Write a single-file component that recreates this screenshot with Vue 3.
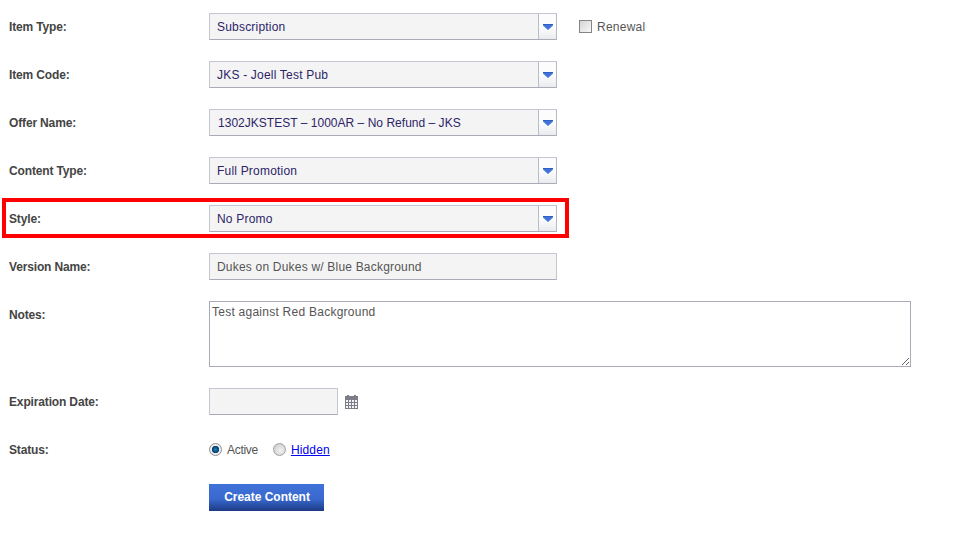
<script setup>
const selects = [
  { label: 'Item Type:', value: 'Subscription', renewal: true },
  { label: 'Item Code:', value: 'JKS - Joell Test Pub' },
  { label: 'Offer Name:', value: '1302JKSTEST – 1000AR – No Refund – JKS', tight: true },
  { label: 'Content Type:', value: 'Full Promotion' },
  { label: 'Style:', value: 'No Promo', highlight: true }
]
const calX = [1, 4, 7, 10]
const calY = [5, 8, 11]
</script>

<template>
  <form class="form" @submit.prevent>
    <div v-for="s in selects" :key="s.label" class="row">
      <div v-if="s.highlight" class="highlight"></div>
      <label class="label">{{ s.label }}</label>
      <div class="select">
        <span class="select-text" :class="{ tight: s.tight }">{{ s.value }}</span>
        <span class="select-btn"><svg width="10" height="6" viewBox="0 0 10 6"><path d="M0 0h10v1.5L5 6 0 1.5z" fill="#3f74d6"/><path d="M0 0h10v1H0z" fill="#2f5fc4"/></svg></span>
      </div>
      <div v-if="s.renewal" class="renewal">
        <span class="checkbox"></span>
        <span>Renewal</span>
      </div>
    </div>

    <div class="row">
      <label class="label">Version Name:</label>
      <div class="input version">Dukes on Dukes w/ Blue Background</div>
    </div>

    <div class="row row-notes">
      <label class="label">Notes:</label>
      <textarea class="notes" readonly>Test against Red Background</textarea>
    </div>

    <div class="row">
      <label class="label">Expiration Date:</label>
      <div class="input date"></div>
      <svg class="cal" width="13" height="14" viewBox="0 0 13 14">
        <rect x="0" y="1" width="13" height="13" fill="#7b7e88"/>
        <rect x="2" y="0" width="2" height="2" fill="#7b7e88"/>
        <rect x="9" y="0" width="2" height="2" fill="#7b7e88"/>
        <g fill="#f3f3f5">
          <template v-for="x in calX" :key="x">
            <rect v-for="y in calY" :key="y" :x="x" :y="y" width="2" height="2" />
          </template>
        </g>
      </svg>
    </div>

    <div class="row">
      <label class="label">Status:</label>
      <span class="radio radio-on"></span>
      <span class="radio-label">Active</span>
      <span class="radio radio-off"></span>
      <a class="link" href="#">Hidden</a>
    </div>

    <div class="row">
      <span class="label"></span>
      <button class="submit" type="button">Create Content</button>
    </div>
  </form>
</template>

<style>
html, body { background: #fff; margin: 0; }
</style>

<style scoped>
.form {
  display: flex;
  flex-direction: column;
  gap: 21px;
  padding-top: 13px;
  font-family: "Liberation Sans", Arial, sans-serif;
  font-size: 12px;
  color: #444;
}
.row {
  position: relative;
  display: flex;
  align-items: center;
  height: 27px;
}
.row-notes {
  align-items: flex-start;
  height: 66px;
}
.row-notes .label { padding-top: 7px; }
.label {
  box-sizing: border-box;
  width: 209px;
  flex: none;
  padding-left: 9px;
  font-weight: bold;
  letter-spacing: -0.15px;
  color: #444;
}
.highlight {
  position: absolute;
  left: 2px;
  top: -7px;
  width: 567px;
  height: 40px;
  box-sizing: border-box;
  border: 4px solid #f00;
}
.select {
  position: relative;
  box-sizing: border-box;
  display: flex;
  align-items: stretch;
  width: 348px;
  height: 27px;
  background: #f4f4f4;
  border: 1px solid #c4c6d2;
  border-bottom-color: #a9abb6;
  border-right-color: #b6bac6;
}
.select-text {
  flex: 1;
  padding-left: 7px;
  line-height: 27px;
  color: #2c2468;
  letter-spacing: 0.2px;
  white-space: nowrap;
}
.select-text.tight {
  padding-left: 8px;
  letter-spacing: 0.02px;
}
.select-btn {
  box-sizing: border-box;
  width: 18px;
  border-left: 1px solid #b8bcc8;
  background: linear-gradient(#fcfcfc, #fcfcfc 55%, #e8eaee);
  display: flex;
  align-items: center;
  justify-content: center;
}
.select-btn svg { margin-top: 1px; }
.renewal {
  display: flex;
  align-items: center;
  margin-left: 22px;
  gap: 5px;
  color: #555;
  letter-spacing: 0.25px;
}
.checkbox {
  box-sizing: border-box;
  width: 13px;
  height: 13px;
  border: 1px solid #858585;
  background: linear-gradient(135deg, #d4d4d4, #f8f8f8);
}
.input {
  box-sizing: border-box;
  height: 27px;
  background: #f4f4f4;
  border: 1px solid #c4c6d2;
  border-bottom-color: #a9abb6;
}
.version {
  width: 348px;
  padding-left: 7px;
  line-height: 27px;
  letter-spacing: 0.2px;
  color: #555;
}
.date { width: 129px; }
.cal { margin-left: 7px; }
.notes {
  box-sizing: border-box;
  width: 702px;
  height: 66px;
  margin: 0;
  padding: 3px 2px;
  background: #fff;
  border: 1px solid #a9abb6;
  border-radius: 0;
  font: inherit;
  letter-spacing: 0.25px;
  color: #555;
  outline: none;
}
.radio {
  box-sizing: border-box;
  width: 13px;
  height: 13px;
  border-radius: 50%;
  flex: none;
}
.radio-on {
  border: 1px solid #8d8d8d;
  background: radial-gradient(circle, #1d86b8 0, #0d4a80 2.6px, #0d3f70 3.4px, #eeeeee 4px);
}
.radio-off {
  margin-left: 15px;
  border: 1px solid #a0a0a0;
  background: radial-gradient(circle at 60% 60%, #f2f2f2, #c6c6c6);
}
.radio-label {
  margin-left: 5px;
  letter-spacing: -0.3px;
  color: #555;
}
.link {
  margin-left: 5px;
  color: #00e;
  text-decoration: underline;
  letter-spacing: 0.15px;
}
.submit {
  box-sizing: border-box;
  width: 115px;
  height: 27px;
  padding: 0 0 2px 1px;
  border: 0;
  background: linear-gradient(#3f72d8, #3a69cf 55%, #1c3a85);
  color: #fff;
  font: inherit;
  font-weight: bold;
  letter-spacing: -0.02px;
}
</style>
